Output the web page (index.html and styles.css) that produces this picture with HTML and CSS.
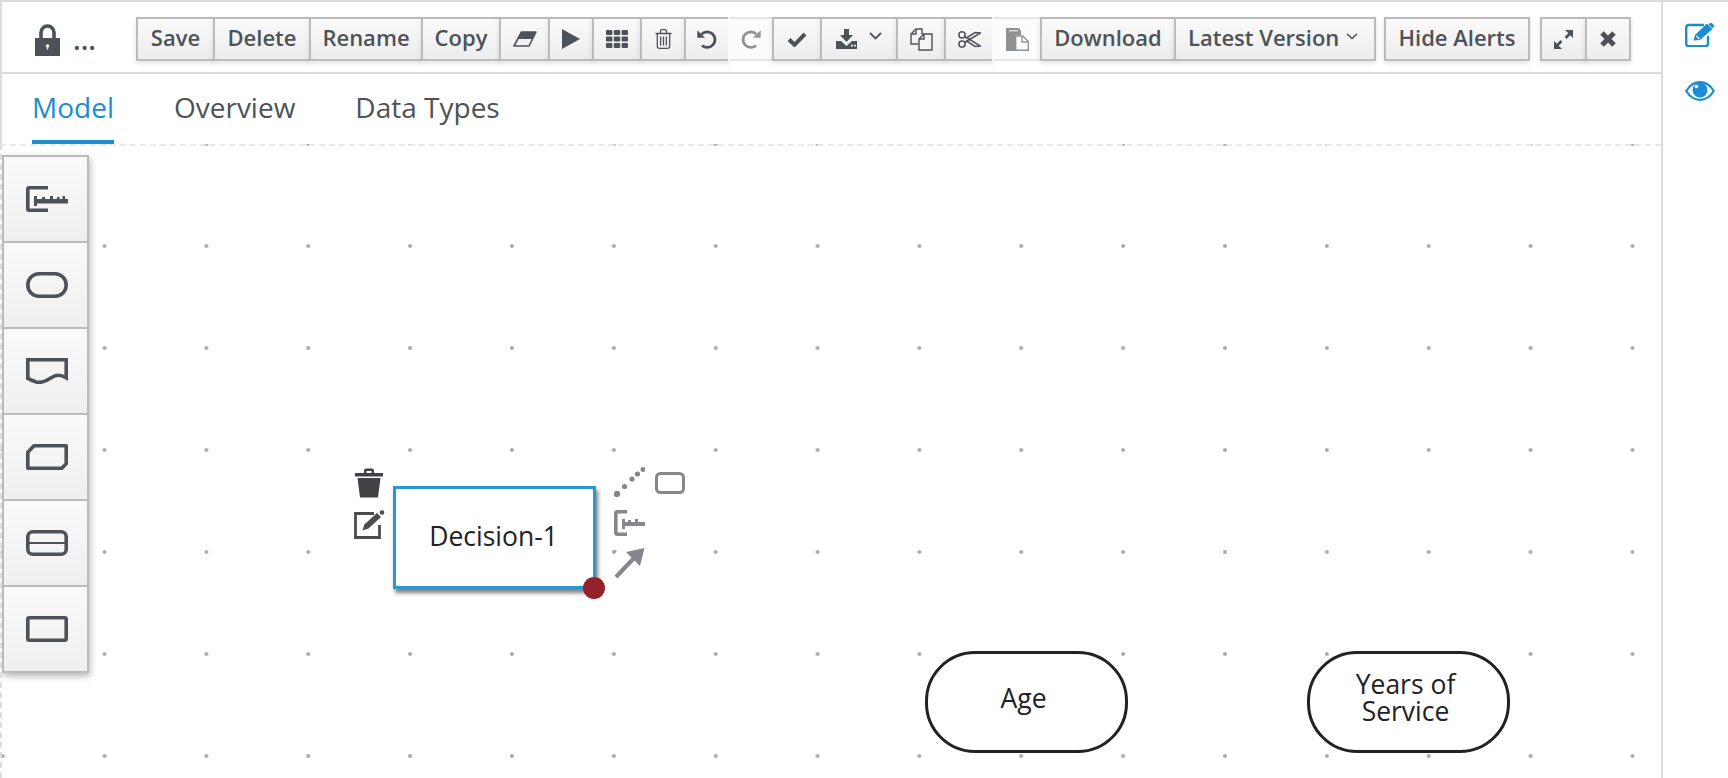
FILE: index.html
```html
<!DOCTYPE html>
<html lang="en">
<head>
  <meta charset="UTF-8">
  <title>Decision Editor</title>
  <link rel="stylesheet" href="styles.css">
</head>
<body>
  <div class="app">
    <div class="main">
      <div class="toolbar">
        <div class="doc-title">
          <svg class="lock" viewBox="0 0 25 32"><path d="M6 15V8.500a6.500 6.500 0 0 1 13 0V15" fill="none" stroke="#4d5258" stroke-width="3.600"/><path d="M0 14h25v18H0z" fill="#4d5258"/><circle cx="12.500" cy="22" r="1.800" fill="#fff"/><path d="M11.900 22h1.200v3.500h-1.200z" fill="#fff"/></svg>
          <span class="dots">...</span>
        </div>
        <div class="btn-group">
          <button class="btn w-save"><span class="label">Save</span></button>
          <button class="btn w-delete"><span class="label">Delete</span></button>
          <button class="btn w-rename"><span class="label">Rename</span></button>
          <button class="btn w-copy"><span class="label">Copy</span></button>
          <button class="btn w-eraser"><svg width="24" height="16" viewBox="0 0 24 16"><path d="M8.500 1H23l-7 14H1z" fill="none" stroke="#4d5258" stroke-width="1.600" stroke-linejoin="round"/><path d="M8 1h15l-4 7H4z" fill="#4d5258"/></svg></button>
          <button class="btn w-46"><svg width="18" height="20" viewBox="0 0 18 20"><path d="M0 0l18 10L0 20z" fill="#4d5258"/></svg></button>
          <button class="btn w-50"><svg width="22" height="18" viewBox="0 0 22 18" fill="#4d5258"><rect width="6.400" height="5" rx="1"/><rect x="7.800" width="6.400" height="5" rx="1"/><rect x="15.600" width="6.400" height="5" rx="1"/><rect y="6.500" width="6.400" height="5" rx="1"/><rect x="7.800" y="6.500" width="6.400" height="5" rx="1"/><rect x="15.600" y="6.500" width="6.400" height="5" rx="1"/><rect y="13" width="6.400" height="5" rx="1"/><rect x="7.800" y="13" width="6.400" height="5" rx="1"/><rect x="15.600" y="13" width="6.400" height="5" rx="1"/></svg></button>
          <button class="btn w-46"><svg width="17" height="20" viewBox="0 0 17 20" fill="none" stroke="#4d5258" stroke-width="1.300"><path d="M.5 4.500h16M5.500 4.500V2.200q0-1.500 1.500-1.500h3q1.500 0 1.500 1.500v2.300M2.300 4.500v13q0 1.800 1.800 1.800h8.800q1.800 0 1.800-1.800v-13M5.600 7.500v9M8.500 7.500v9M11.400 7.500v9"/></svg></button>
          <button class="btn w-46"><svg width="20" height="20" viewBox="0 0 20 20" fill="none" stroke="#4d5258" stroke-width="2.800"><path d="M4.600 5.200A7.800 7.800 0 1 1 5 16.500"/><path d="M.3 1.200L8 8.800H.3z" fill="#4d5258" stroke="none"/></svg></button>
          <button class="btn btn-off w-46"><svg width="20" height="20" viewBox="0 0 20 20" fill="none" stroke="#8f9295" stroke-width="2.800"><path d="M15.400 5.200A7.800 7.800 0 1 0 15 16.500"/><path d="M19.700 1.200L12 8.800h7.700z" fill="#8f9295" stroke="none"/></svg></button>
          <button class="btn w-50"><svg width="20" height="15" viewBox="0 0 20 15"><path d="M2 7.500l5.500 5.300L18 2" fill="none" stroke="#4d5258" stroke-width="4"/></svg></button>
          <button class="btn w-78"><svg width="21" height="20" viewBox="0 0 21 20" fill="#4d5258"><path d="M8 0h5v6h4l-6.500 7L4 6h4z"/><path d="M0 12h5l5.500 5 5.500-5h5v8H0z"/><path d="M15 15.800h1.800v1.800H15zM18 15.800h1.800v1.800H18z" fill="#fff"/></svg><svg class="chevron" width="13" height="8" viewBox="0 0 13 8"><path d="M1 1l5.500 5.500L12 1" fill="none" stroke="#4d5258" stroke-width="1.800"/></svg></button>
          <button class="btn w-50"><svg width="23" height="23" viewBox="0 0 23 23" fill="none" stroke="#4d5258" stroke-width="1.400"><path d="M8 16H1V6l5-5h6v5"/><path d="M6 1v5H1"/><path d="M12 6h5v.5M9 11l5-5h8v16H9z" fill="#f4f4f4"/><path d="M14 6v5H9"/></svg></button>
          <button class="btn w-50"><svg width="23" height="17" viewBox="0 0 23 17" fill="none" stroke="#4d5258" stroke-width="1.500"><circle cx="4" cy="3.900" r="3.100"/><circle cx="4" cy="13.100" r="3.100"/><path d="M6.700 5.500L22.500 15l-5.500.5-9-5.800M6.700 11.500L22.500 2 17 1.500 8 7.300"/></svg></button>
          <button class="btn btn-off w-50"><svg width="23" height="23" viewBox="0 0 23 23"><path d="M0 0h13l2 3v4H9v16H0z" fill="#8f9295"/><path d="M9.700 8h7l5.600 5.500v8.800H9.700z" fill="#fff" stroke="#8f9295" stroke-width="1.400"/><path d="M16 8v6h6" fill="none" stroke="#8f9295" stroke-width="1.400"/><path d="M3 2.800h9" stroke="#fff" stroke-width="1"/></svg></button>
          <button class="btn w-download"><span class="label">Download</span></button>
          <button class="btn w-version"><span class="label">Latest Version</span><svg class="chevron-sm" width="12" height="7" viewBox="0 0 12 7"><path d="M1 1l5 4.500L11 1" fill="none" stroke="#4d5258" stroke-width="1.600"/></svg></button>
        </div>
        <button class="btn w-alerts"><span class="label">Hide Alerts</span></button>
        <div class="btn-group">
          <button class="btn w-expand"><svg width="19" height="19" viewBox="0 0 19 19" fill="#4d5258"><path d="M11 0h8v8l-2.800-2.800-3.700 3.700-1.900-1.900 3.700-3.700zM8 19H0v-8l2.800 2.800 3.700-3.700 1.900 1.900-3.700 3.700z"/></svg></button>
          <button class="btn w-close"><svg width="18" height="18" viewBox="0 0 18 18"><path d="M3 3l12 12M15 3L3 15" stroke="#4d5258" stroke-width="5"/></svg></button>
        </div>
      </div>
      <div class="tabs">
        <a class="tab active">Model</a>
        <a class="tab">Overview</a>
        <a class="tab">Data Types</a>
      </div>
      <div class="canvas">
        <div class="palette">
          <div class="palette-item"><svg viewBox="0 0 42 26"><path d="M22 1.800H3.200q-1.400 0-1.400 1.400v19.600q0 1.400 1.400 1.400H22" fill="none" stroke="#4d5258" stroke-width="3.600"/><path d="M8 10h3v3h5v-2h3v2h5v-3h3v3h4v-2h2.500v2h3v-3H39v3h3v4.500H11V20H8z" fill="#4d5258"/></svg></div>
          <div class="palette-item"><svg viewBox="0 0 42 26"><rect x="1.800" y="1.800" width="38.400" height="22.400" rx="11.200" fill="none" stroke="#4d5258" stroke-width="3.600"/></svg></div>
          <div class="palette-item"><svg viewBox="0 0 42 26"><path d="M1.800 1.800h38.400v18c-6-3.500-10-3.500-15 0s-10 5.500-15 4.200c-3-1-5.500-2-8.400-3.600z" fill="none" stroke="#4d5258" stroke-width="3.600"/></svg></div>
          <div class="palette-item"><svg viewBox="0 0 42 26"><path d="M8 1.800h32.200v18l-4.400 4.400H1.800v-16z" fill="none" stroke="#4d5258" stroke-width="3.600" stroke-linejoin="round"/></svg></div>
          <div class="palette-item"><svg viewBox="0 0 42 26"><rect x="1.800" y="1.800" width="38.400" height="22.400" rx="5" fill="none" stroke="#4d5258" stroke-width="3.600"/><path d="M1.800 13h38.400" stroke="#4d5258" stroke-width="2"/></svg></div>
          <div class="palette-item"><svg viewBox="0 0 42 26"><rect x="1.800" y="1.800" width="38.400" height="22.400" rx="1.500" fill="none" stroke="#4d5258" stroke-width="3.600"/></svg></div>
        </div>

        <div class="node decision"><span class="node-text">Decision-1</span><span class="node-handle"></span></div>
        <div class="node input-data age"><span class="node-text">Age</span></div>
        <div class="node input-data service"><span class="node-text">Years of<br>Service</span></div>

        <svg class="glyph g-trash" width="28" height="30" viewBox="0 0 28 30" fill="#404245"><path d="M0 5h28v3.500H0zM9 5V2.500Q9 .5 11 .5h6q2 0 2 2V5h-2.500V3h-5v2z"/><path d="M2.500 10h23L23 29.500H5z"/></svg>
        <svg class="glyph g-edit" width="31" height="29" viewBox="0 0 31 29" fill="none" stroke="#4a4c4f" stroke-width="2.800"><path d="M20 3.500H1.500v24h24V15"/><path d="M8.500 20.500l1.800-6L23 3l4 4-12.500 11.500z" fill="#4a4c4f" stroke="none"/><circle cx="28" cy="2.500" r="2.300" fill="#4a4c4f" stroke="none"/></svg>
        <svg class="glyph g-dotted" width="31" height="30" viewBox="0 0 31 30" fill="#85878a"><circle cx="3" cy="27" r="3.200"/><circle cx="10.500" cy="19.500" r="2.600"/><circle cx="18" cy="12" r="2.600"/><circle cx="23.500" cy="7" r="2.600"/><circle cx="29" cy="2.500" r="2.500"/></svg>
        <svg class="glyph g-rect" width="30" height="22" viewBox="0 0 30 22"><rect x="1.500" y="1.500" width="27" height="19" rx="4" fill="none" stroke="#85878a" stroke-width="3"/></svg>
        <svg class="glyph g-conn" width="31" height="26" viewBox="0 0 31 26"><path d="M13 1.800H3.500q-1.700 0-1.700 1.700v19q0 1.700 1.700 1.700H13" fill="none" stroke="#85878a" stroke-width="3.600"/><path d="M8 9h3v3h3v-2h3v2h4V9h3v3h7v4H11v3H8z" fill="#85878a"/></svg>
        <svg class="glyph g-arrow" width="31" height="31" viewBox="0 0 31 31" fill="#85878a"><path d="M30.500 0L26 18l-5.500-5.500L3.500 30.500 .5 27.500 17.500 9.500 12 4z"/><circle cx="1.500" cy="3" r="1.300" opacity=".5"/></svg>
      </div>
    </div>
    <div class="side">
      <svg class="side-icon" width="30" height="24" viewBox="0 0 30 24" fill="none" stroke="#1b8dd0" stroke-width="2.400"><path d="M19 2H4Q1.200 2 1.200 5v15.500q0 2.800 2.800 2.800h16q3 0 3-2.800V13"/><path d="M8.500 17.500l1.500-5.500L22 .5 27.500 6 15 17z" fill="#1b8dd0" stroke="none"/><path d="M23.500 1.200L26 -.8l3.500 3.500-2 2.500z" fill="#1b8dd0" stroke="none"/><path d="M11.300 12.800l3 3.200" stroke="#fff" stroke-width="1.200"/></svg>
      <svg class="side-icon eye" width="30" height="20" viewBox="0 0 30 20"><path d="M1.200 10C5 4 10 1.200 15 1.200S25 4 28.800 10C25 16 20 18.800 15 18.800S5 16 1.200 10z" fill="none" stroke="#1b8dd0" stroke-width="2.200"/><circle cx="15" cy="9" r="7.500" fill="#1b8dd0"/><circle cx="11.500" cy="5.500" r="1.800" fill="#fff"/></svg>
    </div>
  </div>
</body>
</html>
```

FILE: styles.css
```css
* {
  box-sizing: border-box;
}
html, body {
  height: 100%;
  margin: 0;
}
body {
  font-family: "Open Sans", "Noto Sans", sans-serif;
  color: #4d5258;
  background: #fff;
  overflow: hidden;
}
.app {
  display: flex;
  height: 100%;
  border-top: 2px solid #ddd;
}
.main {
  flex: 1;
  display: flex;
  flex-direction: column;
  min-width: 0;
}
.side {
  width: 67px;
  border-left: 2px solid #ddd;
  display: flex;
  flex-direction: column;
  align-items: center;
  padding-top: 21px;
  padding-left: 8px;
}
.side-icon.eye {
  margin-top: 34px;
}

/* toolbar */
.toolbar {
  height: 72px;
  flex: none;
  display: flex;
  align-items: flex-start;
  padding: 15px 0 0 35px;
  border-bottom: 2px solid #ddd;
  border-left: 2px solid #ddd;
}
.doc-title {
  width: 99px;
  height: 44px;
  display: flex;
  align-items: flex-start;
}
.lock {
  width: 25px;
  height: 32px;
  margin: 7px 0 0 -2px;
}
.dots {
  margin: 6px 0 0 13px;
  font-size: 28px;
  font-weight: 600;
  line-height: 32px;
}
.btn-group {
  display: flex;
}
.btn {
  height: 44px;
  padding: 0;
  display: flex;
  align-items: center;
  justify-content: center;
  flex: none;
  font-family: inherit;
  font-size: 22px;
  font-weight: 600;
  color: #4d5258;
  background: linear-gradient(#fafafa, #ededed);
  border: 2px solid #bbb;
  margin-left: -2px;
  box-shadow: 0 2px 5px rgba(0, 0, 0, 0.12);
}
.label {
  margin-top: -4px;
}
.btn-off {
  background: #fcfcfc;
  border-color: #e6e6e6 transparent #e6e6e6 transparent;
  box-shadow: none;
}
.w-save { width: 79px; margin-left: 0; }
.w-delete { width: 98px; }
.w-rename { width: 114px; }
.w-copy { width: 80px; }
.w-46 { width: 46px; }
.w-50 { width: 50px; }
.w-eraser { width: 51px; }
.w-78 { width: 78px; }
.w-download { width: 136px; }
.w-version { width: 202px; padding-left: 12px; justify-content: flex-start; }
.w-alerts { width: 146px; margin-left: 8px; }
.w-expand { width: 47px; margin-left: 10px; }
.w-close { width: 46px; }
.chevron { margin-left: 12px; margin-bottom: 6px; }
.chevron-sm { margin-left: 7px; margin-bottom: 6px; }

/* tabs */
.tabs {
  height: 70px;
  flex: none;
  display: flex;
  gap: 60px;
  padding-left: 30px;
  border-left: 2px solid #ddd;
}
.tab {
  height: 70px;
  padding-top: 15px;
  font-size: 28px;
  line-height: 37px;
}
.tab.active {
  color: #1b8dd0;
  border-bottom: 4px solid #1b8dd0;
}

/* canvas */
.canvas {
  flex: 1;
  position: relative;
  overflow: hidden;
  border-top: 2px dashed #e8e8e8;
  border-left: 2px dashed #ddd;
  background-image: radial-gradient(circle, #a8a8a8 1.4px, rgba(168, 168, 168, 0) 2.4px);
  background-size: 101.87px 102px;
  background-position: 53.6px -51px;
  background-origin: border-box;
}
.palette {
  position: absolute;
  top: 9px;
  left: 0;
  width: 87px;
  display: flex;
  flex-direction: column;
  box-shadow: 1px 3px 7px rgba(0, 0, 0, 0.3);
}
.palette-item {
  height: 86px;
  display: flex;
  align-items: center;
  justify-content: center;
  padding-left: 2px;
  background: linear-gradient(#fafafa, #efefef);
  border: 2px solid #bbb;
  border-top-width: 0;
}
.palette-item:first-child {
  height: 88px;
  border-top-width: 2px;
}
.palette-item svg {
  width: 42px;
  height: 26px;
}
.node {
  position: absolute;
  display: flex;
  align-items: center;
  justify-content: center;
  text-align: center;
  font-size: 26.500px;
  line-height: 27px;
  color: #222;
  background: #fff;
}
.decision {
  left: 391px;
  top: 340px;
  width: 203px;
  height: 103px;
  border: 3px solid #2b97d1;
  box-shadow: 2px 4px 4px rgba(0, 0, 0, 0.5);
}
.decision .node-text {
  margin: -3px 2px 0 0;
}
.node-handle {
  position: absolute;
  right: -12px;
  bottom: -13px;
  width: 22px;
  height: 22px;
  border-radius: 50%;
  background: #94202a;
}
.input-data {
  top: 505px;
  width: 203px;
  height: 102px;
  border: 3px solid #222;
  border-radius: 50px;
  background: #fff;
}
.input-data .node-text {
  margin: -8px 6px 0 0;
}
.age { left: 923px; }
.service { left: 1305px; }
.glyph {
  position: absolute;
}
.g-trash { left: 353px; top: 322px; }
.g-edit { left: 352px; top: 364px; }
.g-dotted { left: 612px; top: 321px; }
.g-rect { left: 653px; top: 326px; }
.g-conn { left: 612px; top: 364px; }
.g-arrow { left: 612px; top: 402px; }
```
